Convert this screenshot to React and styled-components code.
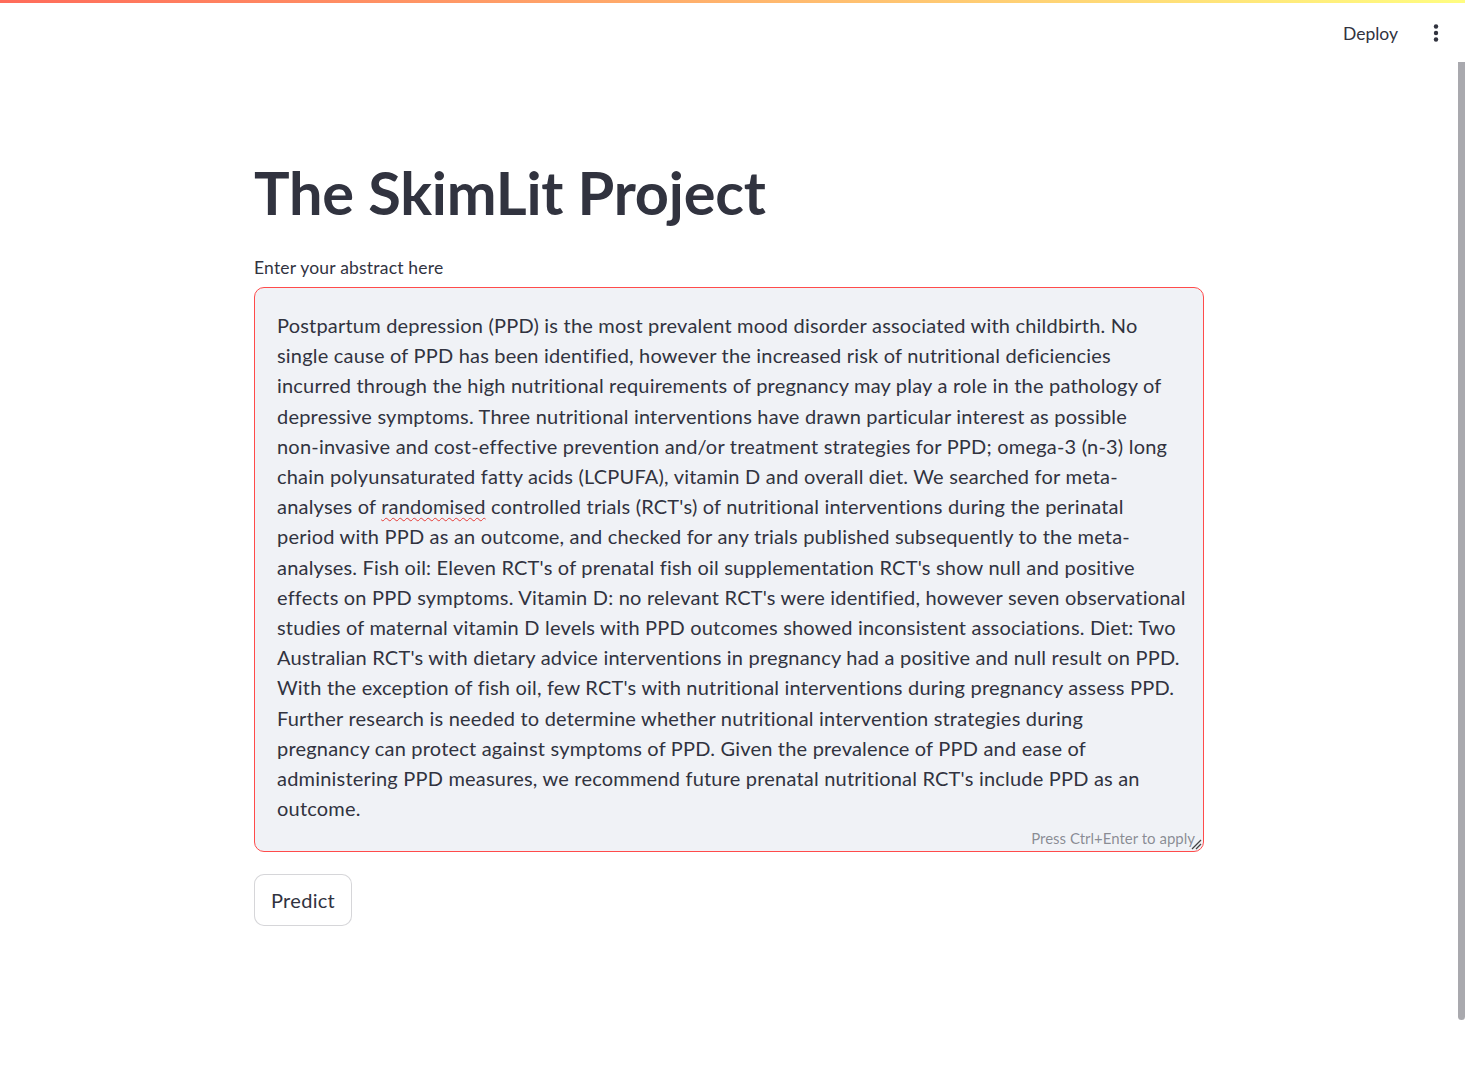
import React from "react";
import styled, { createGlobalStyle } from "styled-components";

const GlobalStyle = createGlobalStyle`
  body {
    margin: 0;
    background: #ffffff;
    font-family: Lato, "Noto Sans", sans-serif;
    color: #31333f;
  }
`;

const Decoration = styled.div`
  height: 3px;
  background: linear-gradient(90deg, #ff6b5a, #fffd80);
`;

const Header = styled.header`
  height: 60px;
  display: flex;
  align-items: center;
  justify-content: flex-end;
  padding-right: 26px;
  gap: 35px;
`;

const DeployButton = styled.button`
  border: none;
  background: none;
  font-family: inherit;
  font-size: 17.5px;
  color: #31333f;
  padding: 0;
  cursor: pointer;
`;

const MenuButton = styled.button`
  border: none;
  background: none;
  padding: 0;
  display: flex;
  align-items: center;
  cursor: pointer;
`;

const ScrollThumb = styled.div`
  position: fixed;
  right: 0;
  top: 62px;
  width: 7px;
  height: 958px;
  background: #a9a9ae;
  border-radius: 0 0 4px 4px;
`;

const Main = styled.main`
  width: 950px;
  margin: 0 auto;
  padding: 93px 7px 0 0;
`;

const Title = styled.h1`
  margin: 0;
  font-size: 59.5px;
  font-weight: 700;
  line-height: 72px;
  letter-spacing: -0.2px;
  color: #31333f;
`;

const Label = styled.label`
  display: block;
  margin-top: 28px;
  font-size: 17.5px;
  line-height: 24px;
  letter-spacing: 0.2px;
  color: #31333f;
`;

const TextBox = styled.div`
  position: relative;
  margin-top: 7px;
  height: 565px;
  box-sizing: border-box;
  background: #f0f2f6;
  border: 1px solid #ff4b4b;
  border-radius: 10px;
  padding: 22px 20px 0 22px;
  overflow: hidden;
`;

const Abstract = styled.div`
  font-size: 20px;
  line-height: 30.2px;
  letter-spacing: 0.2px;
  white-space: pre;
  color: #31333f;
`;

const Misspelt = styled.span`
  text-decoration: underline wavy #e53935;
  text-decoration-thickness: 1px;
  text-underline-offset: 3px;
`;

const Hint = styled.div`
  position: absolute;
  right: 8px;
  bottom: 4px;
  font-size: 15px;
  color: rgba(49, 51, 63, 0.55);
`;

const Grip = styled.svg`
  position: absolute;
  right: 1px;
  bottom: 1px;
`;

const PredictButton = styled.button`
  margin-top: 22px;
  height: 52px;
  padding: 0 16px;
  background: #ffffff;
  border: 1px solid rgba(49, 51, 63, 0.2);
  border-radius: 10px;
  font-family: inherit;
  font-size: 20px;
  letter-spacing: 0.3px;
  color: #31333f;
  cursor: pointer;
`;

const before = `Postpartum depression (PPD) is the most prevalent mood disorder associated with childbirth. No
single cause of PPD has been identified, however the increased risk of nutritional deficiencies
incurred through the high nutritional requirements of pregnancy may play a role in the pathology of
depressive symptoms. Three nutritional interventions have drawn particular interest as possible
non-invasive and cost-effective prevention and/or treatment strategies for PPD; omega-3 (n-3) long
chain polyunsaturated fatty acids (LCPUFA), vitamin D and overall diet. We searched for meta-
analyses of `;

const after = ` controlled trials (RCT's) of nutritional interventions during the perinatal
period with PPD as an outcome, and checked for any trials published subsequently to the meta-
analyses. Fish oil: Eleven RCT's of prenatal fish oil supplementation RCT's show null and positive
effects on PPD symptoms. Vitamin D: no relevant RCT's were identified, however seven observational
studies of maternal vitamin D levels with PPD outcomes showed inconsistent associations. Diet: Two
Australian RCT's with dietary advice interventions in pregnancy had a positive and null result on PPD.
With the exception of fish oil, few RCT's with nutritional interventions during pregnancy assess PPD.
Further research is needed to determine whether nutritional intervention strategies during
pregnancy can protect against symptoms of PPD. Given the prevalence of PPD and ease of
administering PPD measures, we recommend future prenatal nutritional RCT's include PPD as an
outcome.`;

export default function App() {
  return (
    <>
      <GlobalStyle />
      <Decoration />
      <Header>
        <DeployButton>Deploy</DeployButton>
        <MenuButton aria-label="menu">
          <svg width="6" height="18" viewBox="0 0 6 18">
            <circle cx="3" cy="2.5" r="2.2" fill="#31333f" />
            <circle cx="3" cy="9" r="2.2" fill="#31333f" />
            <circle cx="3" cy="15.5" r="2.2" fill="#31333f" />
          </svg>
        </MenuButton>
      </Header>
      <ScrollThumb />
      <Main>
        <Title>The SkimLit Project</Title>
        <Label>Enter your abstract here</Label>
        <TextBox>
          <Abstract>
            {before}
            <Misspelt>randomised</Misspelt>
            {after}
          </Abstract>
          <Hint>Press Ctrl+Enter to apply</Hint>
          <Grip width="12" height="12" viewBox="0 0 12 12">
            <line x1="2" y1="11" x2="11" y2="2" stroke="#444" strokeWidth="1.2" />
            <line x1="6" y1="11" x2="11" y2="6" stroke="#444" strokeWidth="1.2" />
          </Grip>
        </TextBox>
        <PredictButton>Predict</PredictButton>
      </Main>
    </>
  );
}
